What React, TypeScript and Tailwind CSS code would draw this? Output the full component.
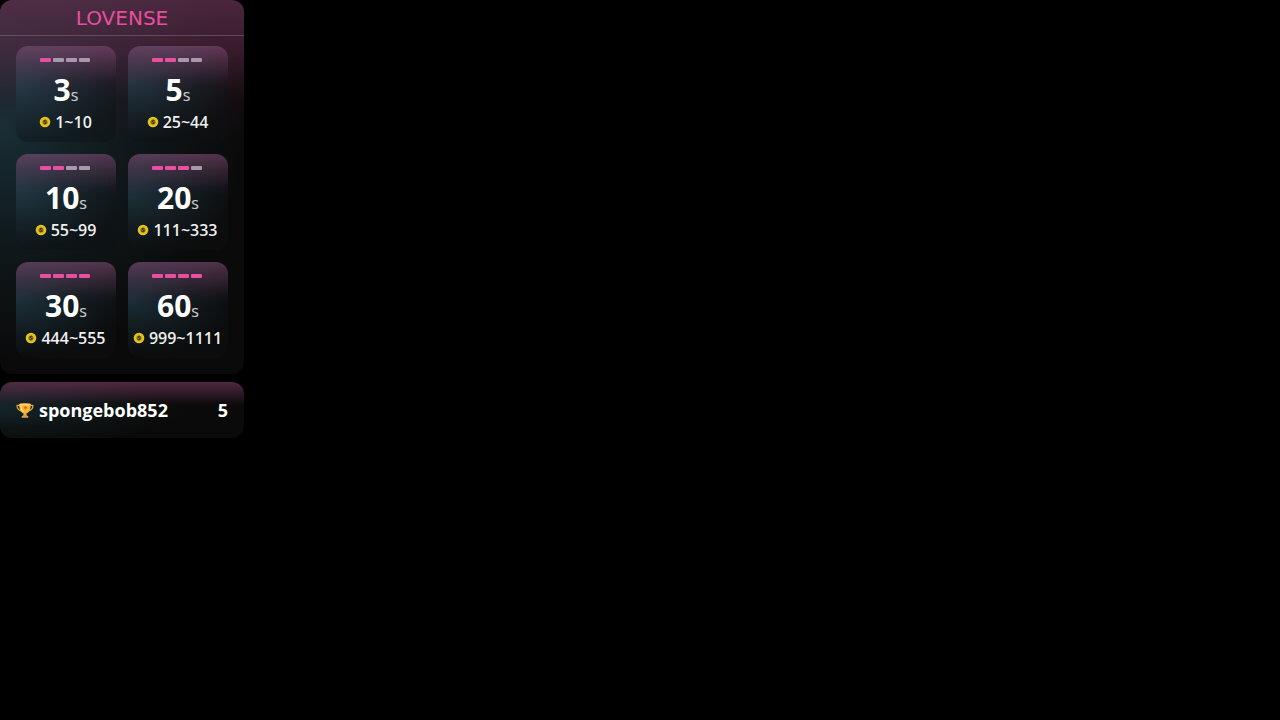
import clsx from 'clsx';

const levels = [
  { seconds: 3, power: 1, tokens: '1~10' },
  { seconds: 5, power: 2, tokens: '25~44' },
  { seconds: 10, power: 2, tokens: '55~99' },
  { seconds: 20, power: 3, tokens: '111~333' },
  { seconds: 30, power: 4, tokens: '444~555' },
  { seconds: 60, power: 4, tokens: '999~1111' },
];

const CoinIcon = () => (
  <svg viewBox="0 0 12 12" className="size-3 shrink-0" aria-hidden="true">
    <circle cx="6" cy="6" r="5.3" fill="#e3c31c" />
    <circle cx="6" cy="6" r="2.6" fill="#8a7414" />
    <path
      d="M7.3 4.7C6.9 4 5 4 5 5s2.2.8 2.2 1.9S5.1 8 4.7 7.3"
      fill="none"
      stroke="#2f2a10"
      strokeWidth="0.9"
    />
  </svg>
);

const TrophyIcon = () => (
  <svg viewBox="0 0 18 18" className="size-[18px] shrink-0" aria-hidden="true">
    <path
      d="M4.5 4.4H1.2C.8 7.4 2.700 9.500 6.400 10.200M13.500 4.400h3.300c.4 3-1.500 5.100-5.200 5.800"
      fill="none"
      stroke="#e0a63c"
      strokeWidth="1.3"
      strokeLinecap="round"
    />
    <path d="M3.200 3h11.600c0 5-1.300 8.400-4.400 9.400v2.200H7.600v-2.200C4.500 11.400 3.200 8 3.200 3z" fill="#f5b731" />
    <path d="M4.700 4.400c.2 3 1.100 5.200 2.500 6.400" fill="none" stroke="#ffe08a" strokeWidth="1.200" />
    <ellipse cx="9" cy="3.200" rx="5.800" ry="1" fill="#ffd866" />
    <path d="M7.600 13.600h2.800l1.200 1.600H6.400z" fill="#e29a24" />
    <rect x="5.600" y="15" width="6.800" height="1.800" rx=".6" fill="#d9a050" />
    <path d="M9.400 4.600l.6 1.300 1.400.1-1.100.9.4 1.400-1.300-.8-1.200.8.3-1.400-1-.9 1.400-.1z" fill="#e2552f" />
  </svg>
);

export default function App() {
  return (
    <main className="min-h-screen bg-black font-['Open_Sans','Noto_Sans',sans-serif] text-white">
      <div className="flex w-61 flex-col gap-2">
        <section
          aria-label="Tip levels"
          className="rounded-xl bg-[#0a0a0a] bg-[linear-gradient(to_bottom,rgba(190,70,140,0.3)_0%,rgba(180,60,125,0.23)_14%,rgba(130,40,85,0.07)_27%,transparent_38%),linear-gradient(to_bottom,rgba(130,125,140,0.12)_0%,transparent_26%),radial-gradient(ellipse_100%_62%_at_0%_34%,rgba(45,100,118,0.4)_0%,rgba(38,82,95,0.2)_50%,transparent_100%)]"
        >
          <header className="flex h-9 items-center justify-center border-b border-[#86708a]/50">
            <h1 className="font-['DejaVu_Sans',sans-serif] text-xl leading-6 text-[#e84fa0]">LOVENSE</h1>
          </header>

          <div className="grid grid-cols-2 gap-3 px-4 pt-[10px] pb-4">
            {levels.map((level) => (
              <article
                key={level.seconds}
                className="flex flex-col items-center rounded-xl bg-[linear-gradient(to_bottom,rgba(180,80,150,0.32)_0%,rgba(155,65,125,0.2)_18%,transparent_42%),linear-gradient(to_bottom,rgba(145,145,160,0.18)_0%,transparent_34%),radial-gradient(ellipse_110%_62%_at_0%_38%,rgba(65,115,140,0.32)_0%,rgba(50,95,115,0.14)_60%,transparent_100%),linear-gradient(rgba(14,17,19,0.4),rgba(14,17,19,0.4))] pt-3 pb-2"
              >
                <div className="flex gap-0.5 pr-0.5">
                  {[1, 2, 3, 4].map((bar) => (
                    <span
                      key={bar}
                      className={clsx('h-1 w-[11px] rounded-[1px]', bar <= level.power ? 'bg-[#e84fa0]' : 'bg-[#a898ab]')}
                    />
                  ))}
                </div>
                <p className="mt-2 text-[30px] leading-10 font-bold">
                  {level.seconds}
                  <span className="text-base font-normal text-white/80">s</span>
                </p>
                <p className="flex items-center gap-1 pr-px text-base leading-6 font-semibold text-white/95">
                  <CoinIcon />
                  {level.tokens}
                </p>
              </article>
            ))}
          </div>
        </section>

        {/* Top tipper */}
        <section
          aria-label="Top tipper"
          className="flex h-14 items-center gap-[5px] rounded-xl bg-[#0a0a0a] bg-[linear-gradient(to_bottom,rgba(180,65,130,0.34)_0%,transparent_42%),linear-gradient(to_bottom,rgba(130,125,140,0.14)_0%,transparent_36%),radial-gradient(ellipse_75%_70%_at_0%_45%,rgba(45,100,118,0.3)_0%,rgba(38,82,95,0.13)_55%,transparent_100%)] px-4 text-lg font-bold"
        >
          <TrophyIcon />
          <span>spongebob852</span>
          <span className="ml-auto">5</span>
        </section>
      </div>
    </main>
  );
}
